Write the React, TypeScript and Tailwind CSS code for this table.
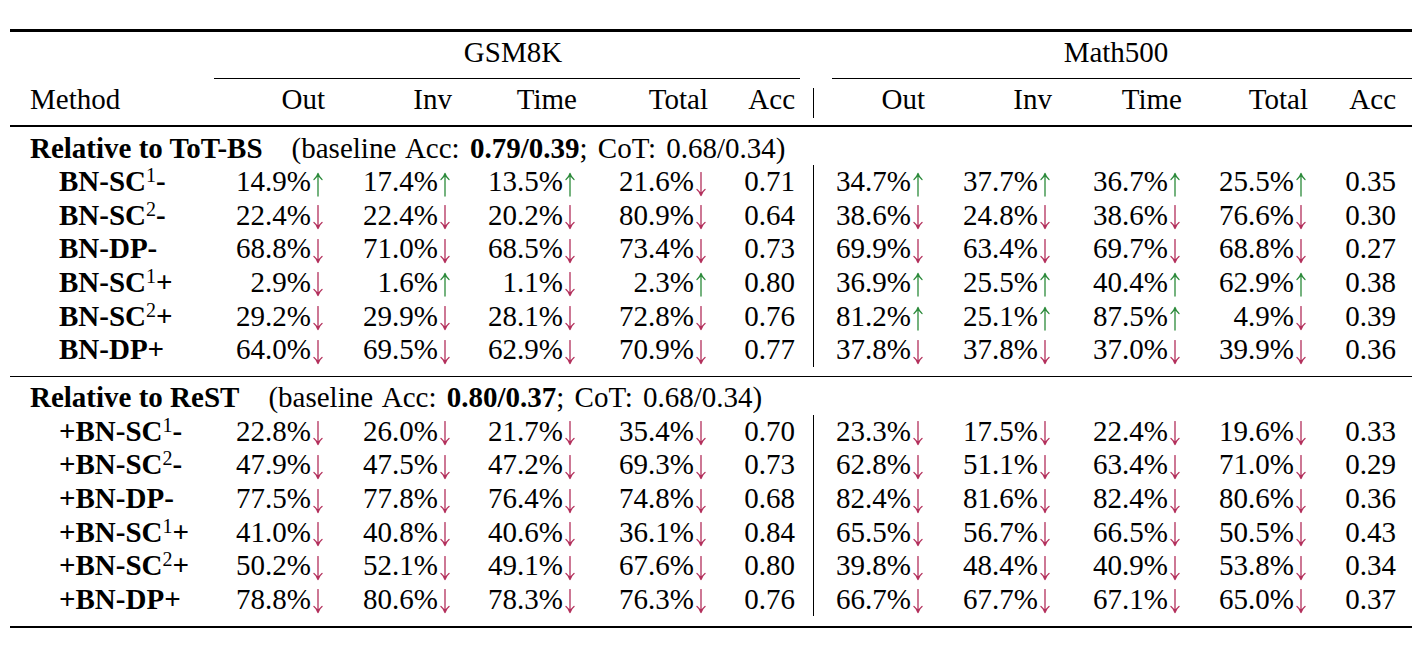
import React from 'react';

// Each value: number followed by 'u' (up, green) or 'd' (down, red)
type Row = { name: string; sup?: string; suffix: string; gsm: string[]; math: string[] };

const tot: Row[] = [
  { name: 'BN-SC', sup: '1', suffix: '-', gsm: ['14.9u', '17.4u', '13.5u', '21.6d', '0.71'], math: ['34.7u', '37.7u', '36.7u', '25.5u', '0.35'] },
  { name: 'BN-SC', sup: '2', suffix: '-', gsm: ['22.4d', '22.4d', '20.2d', '80.9d', '0.64'], math: ['38.6d', '24.8d', '38.6d', '76.6d', '0.30'] },
  { name: 'BN-DP', suffix: '-', gsm: ['68.8d', '71.0d', '68.5d', '73.4d', '0.73'], math: ['69.9d', '63.4d', '69.7d', '68.8d', '0.27'] },
  { name: 'BN-SC', sup: '1', suffix: '+', gsm: ['2.9d', '1.6u', '1.1d', '2.3u', '0.80'], math: ['36.9u', '25.5u', '40.4u', '62.9u', '0.38'] },
  { name: 'BN-SC', sup: '2', suffix: '+', gsm: ['29.2d', '29.9d', '28.1d', '72.8d', '0.76'], math: ['81.2u', '25.1u', '87.5u', '4.9d', '0.39'] },
  { name: 'BN-DP', suffix: '+', gsm: ['64.0d', '69.5d', '62.9d', '70.9d', '0.77'], math: ['37.8d', '37.8d', '37.0d', '39.9d', '0.36'] },
];

const rest: Row[] = [
  { name: '+BN-SC', sup: '1', suffix: '-', gsm: ['22.8d', '26.0d', '21.7d', '35.4d', '0.70'], math: ['23.3d', '17.5d', '22.4d', '19.6d', '0.33'] },
  { name: '+BN-SC', sup: '2', suffix: '-', gsm: ['47.9d', '47.5d', '47.2d', '69.3d', '0.73'], math: ['62.8d', '51.1d', '63.4d', '71.0d', '0.29'] },
  { name: '+BN-DP', suffix: '-', gsm: ['77.5d', '77.8d', '76.4d', '74.8d', '0.68'], math: ['82.4d', '81.6d', '82.4d', '80.6d', '0.36'] },
  { name: '+BN-SC', sup: '1', suffix: '+', gsm: ['41.0d', '40.8d', '40.6d', '36.1d', '0.84'], math: ['65.5d', '56.7d', '66.5d', '50.5d', '0.43'] },
  { name: '+BN-SC', sup: '2', suffix: '+', gsm: ['50.2d', '52.1d', '49.1d', '67.6d', '0.80'], math: ['39.8d', '48.4d', '40.9d', '53.8d', '0.34'] },
  { name: '+BN-DP', suffix: '+', gsm: ['78.8d', '80.6d', '78.3d', '76.3d', '0.76'], math: ['66.7d', '67.7d', '67.1d', '65.0d', '0.37'] },
];

const GRID =
  'grid grid-cols-[204px_111px_127px_125px_131px_87px_37px_93px_127px_130px_126px_88px_16px] h-[33.6px] leading-[33.6px]';

const Arrow = ({ up }: { up: boolean }) => (
  <svg
    width="14"
    height="25"
    viewBox="0 0 14 25"
    className="inline-block align-[-5.5px]"
    fill="none"
    stroke={up ? '#2b8a3a' : '#b3305c'}
    strokeWidth="1.3"
    strokeLinecap="round"
    strokeLinejoin="round"
  >
    {up ? (
      <path d="M7 1.5V24M3 7.5C5 6 6.3 4 7 1.5C7.7 4 9 6 11 7.5" />
    ) : (
      <path d="M7 0.5V23.5M3 17.5C5 19 6.3 21 7 23.5C7.7 21 9 19 11 17.5" />
    )}
  </svg>
);

const Cell = ({ v }: { v: string }) => {
  const dir = v.slice(-1);
  if (dir !== 'u' && dir !== 'd') return <div className="text-right">{v}</div>;
  return (
    <div className="text-right whitespace-nowrap">
      {v.slice(0, -1)}%<Arrow up={dir === 'u'} />
    </div>
  );
};

const Bar = () => (
  <div className="flex justify-center">
    <div className="w-px h-full bg-black" />
  </div>
);

const DataRow = ({ row }: { row: Row }) => (
  <div className={GRID}>
    <div className="pl-[49px] font-bold whitespace-nowrap">
      {row.name}
      {row.sup && <span className="relative -top-[9px] text-[20px] font-normal">{row.sup}</span>}
      {row.suffix}
    </div>
    {row.gsm.map((v, i) => (
      <Cell key={'g' + i} v={v} />
    ))}
    <Bar />
    {row.math.map((v, i) => (
      <Cell key={'m' + i} v={v} />
    ))}
    <div />
  </div>
);

const Heading = ({ title, base }: { title: string; base: string }) => (
  <div className="h-[33.6px] leading-[33.6px] pl-[20px] whitespace-nowrap">
    <span className="font-bold">{title}</span>
    <span className="ml-[29px] [word-spacing:3px]">
      (baseline Acc: <span className="font-bold">{base}</span>; CoT: 0.68/0.34)
    </span>
  </div>
);

const cols = ['Out', 'Inv', 'Time', 'Total', 'Acc'];

export default function App() {
  return (
    <div className="min-h-screen bg-white text-black [font-family:'Liberation_Serif',serif] text-[29px]">
      <div className="ml-[10px] w-[1402px] pt-[29px]">
        {/* toprule */}
        <div className="h-[2.5px] bg-black" />

        {/* dataset header with cmidrules */}
        <div className="flex mt-[4px]">
          <div className="w-[204px]" />
          <div className="w-[586px] flex flex-col">
            <div className="h-[33.6px] leading-[33.6px] text-center pl-[12px]">GSM8K</div>
            <div className="mt-[9px] h-px bg-black" />
          </div>
          <div className="w-[32px]" />
          <div className="w-[580px] flex flex-col">
            <div className="h-[33.6px] leading-[33.6px] text-center pr-[12px]">Math500</div>
            <div className="mt-[9px] h-px bg-black" />
          </div>
        </div>

        {/* column header */}
        <div className={GRID + ' mt-[4.4px]'}>
          <div className="pl-[20px]">Method</div>
          {cols.map((c) => (
            <div key={'gh' + c} className="text-right">{c}</div>
          ))}
          <div className="flex justify-center">
            <div className="w-px h-[30px] mt-[4.6px] bg-black" />
          </div>
          {cols.map((c) => (
            <div key={'mh' + c} className="text-right">{c}</div>
          ))}
          <div />
        </div>

        {/* midrule */}
        <div className="mt-[8px] h-[1.5px] bg-black" />

        <div className="mt-[5px]">
          <Heading title="Relative to ToT-BS" base="0.79/0.39" />
          {tot.map((r, i) => (
            <DataRow key={'t' + i} row={r} />
          ))}
        </div>

        <div className="mt-[9px] h-[1.5px] bg-black" />

        <div className="mt-[4px]">
          <Heading title="Relative to ReST" base="0.80/0.37" />
          {rest.map((r, i) => (
            <DataRow key={'r' + i} row={r} />
          ))}
        </div>

        {/* bottomrule */}
        <div className="mt-[9.5px] h-[2.5px] bg-black" />
      </div>
    </div>
  );
}
